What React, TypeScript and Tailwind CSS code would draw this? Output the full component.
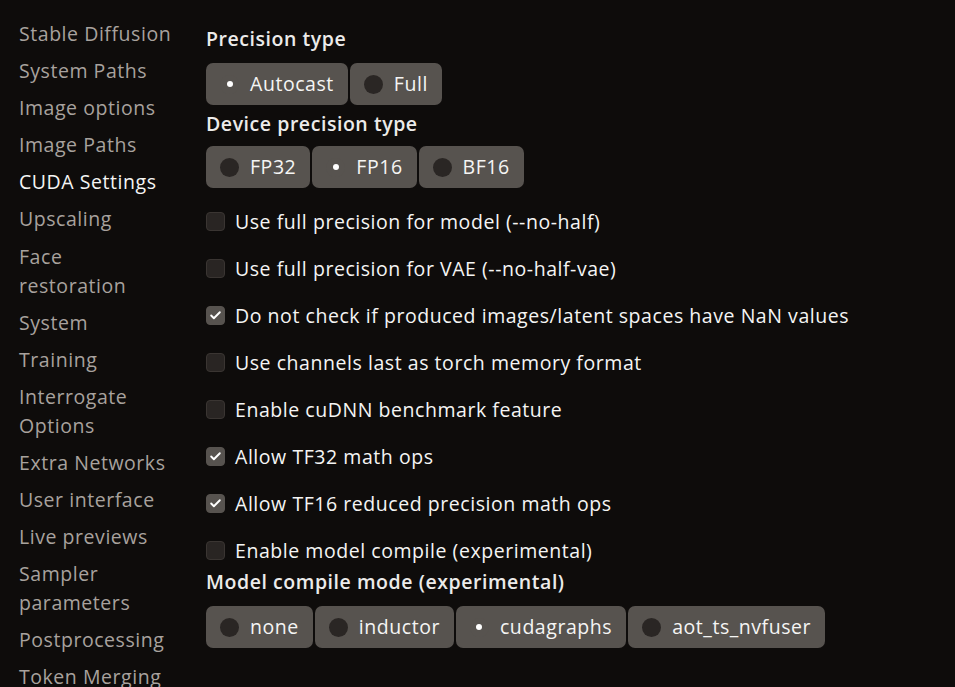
import { Check } from 'lucide-react';

const NAV = [
  'Stable Diffusion',
  'System Paths',
  'Image options',
  'Image Paths',
  'CUDA Settings',
  'Upscaling',
  'Face restoration',
  'System',
  'Training',
  'Interrogate Options',
  'Extra Networks',
  'User interface',
  'Live previews',
  'Sampler parameters',
  'Postprocessing',
  'Token Merging',
];

const CHECKS: [string, boolean][] = [
  ['Use full precision for model (--no-half)', false],
  ['Use full precision for VAE (--no-half-vae)', false],
  ['Do not check if produced images/latent spaces have NaN values', true],
  ['Use channels last as torch memory format', false],
  ['Enable cuDNN benchmark feature', false],
  ['Allow TF32 math ops', true],
  ['Allow TF16 reduced precision math ops', true],
  ['Enable model compile (experimental)', false],
];

function RadioGroup({ options, value }: { options: string[]; value: string }) {
  return (
    <div className="flex gap-[2px]">
      {options.map((opt) => {
        const checked = opt === value;
        return (
          <label
            key={opt}
            className="flex h-[42px] items-center gap-[11px] rounded-[7px] bg-[#57534f] pl-[14px] pr-[14px] text-[#f5f5f4]"
          >
            <span
              className={`flex h-[19px] w-[19px] items-center justify-center rounded-full ${
                checked ? 'bg-[#57534f]' : 'bg-[#2a2624]'
              }`}
            >
              {checked && <span className="h-[6px] w-[6px] rounded-full bg-white" />}
            </span>
            <span>{opt}</span>
          </label>
        );
      })}
    </div>
  );
}

function Heading({ children }: { children: string }) {
  return <div className="font-semibold leading-[26px] text-[#ecebea]">{children}</div>;
}

export default function App() {
  return (
    <div
      className="flex h-[687px] w-[955px] overflow-hidden bg-[#0e0c0b] text-[19.5px] tracking-[0.55px]"
      style={{ fontFamily: '"Open Sans", sans-serif' }}
    >
      <nav className="flex w-[175px] shrink-0 flex-col gap-[8.1px] pl-[19px] pt-[19px]">
        {NAV.map((item) => (
          <div
            key={item}
            className={`leading-[29px] ${item === 'CUDA Settings' ? 'text-[#f5f5f4]' : 'text-[#a8a29e]'}`}
          >
            {item}
          </div>
        ))}
      </nav>

      <main className="flex flex-col pl-[31px] pt-[26px]">
        <Heading>Precision type</Heading>
        <div className="mt-[11px]">
          <RadioGroup options={['Autocast', 'Full']} value="Autocast" />
        </div>
        <div className="mt-[6px]">
          <Heading>Device precision type</Heading>
        </div>
        <div className="mt-[9px]">
          <RadioGroup options={['FP32', 'FP16', 'BF16']} value="FP16" />
        </div>

        <div className="mt-[19px] flex flex-col gap-[18px]">
          {CHECKS.map(([label, on]) => (
            <label key={label} className="flex h-[29px] items-center gap-[10px] text-[#f5f5f4]">
              <span
                className={`flex h-[19px] w-[19px] items-center justify-center rounded-[4px] border ${
                  on ? 'border-[#57534f] bg-[#57534f]' : 'border-[#3a3532] bg-[#292523]'
                }`}
              >
                {on && <Check size={13} strokeWidth={3.5} className="text-white" />}
              </span>
              <span>{label}</span>
            </label>
          ))}
        </div>

        <div className="mt-[4px]">
          <Heading>Model compile mode (experimental)</Heading>
        </div>
        <div className="mt-[11px]">
          <RadioGroup options={['none', 'inductor', 'cudagraphs', 'aot_ts_nvfuser']} value="cudagraphs" />
        </div>
      </main>
    </div>
  );
}
